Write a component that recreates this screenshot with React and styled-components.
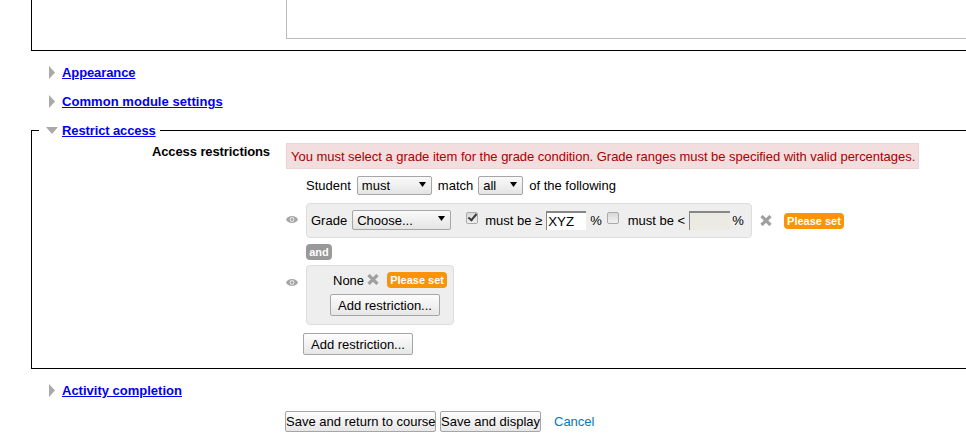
import React from 'react';
import styled, { createGlobalStyle } from 'styled-components';

const GlobalStyle = createGlobalStyle`
  html, body {
    margin: 0;
    padding: 0;
    background: #fff;
  }
  body {
    font-family: "Liberation Sans", Arial, sans-serif;
    font-size: 13px;
    color: #000;
  }
`;

const Page = styled.div`
  width: 966px;
  height: 444px;
  overflow: hidden;
  box-sizing: border-box;
`;

const TopSection = styled.div`
  margin-left: 31px;
  height: 51px;
  box-sizing: border-box;
  border-left: 1px solid #000;
  border-bottom: 1px solid #000;
`;

const TextArea = styled.div`
  margin-left: 254px;
  height: 39px;
  box-sizing: border-box;
  border-left: 1px solid #bbb;
  border-bottom: 1px solid #bbb;
`;

const Collapsed = styled.div`
  display: flex;
  align-items: center;
  height: 16px;
  margin-top: ${p => p.$top}px;
  padding-left: 49px;
`;

const Heading = styled.a`
  font-weight: bold;
  font-size: 13px;
  line-height: 18px;
  height: 16px;
  letter-spacing: ${p => p.$spacing || 0}px;
  color: #0000ee;
  text-decoration: underline;
  cursor: pointer;
`;

const Arrow = styled.svg`
  display: block;
  flex: none;
  fill: #a9a9a9;
`;

const Fieldset = styled.fieldset`
  margin: 13px 0 0 31px;
  padding: 0 0 13px;
  width: 1000px;
  border: 1px solid #000;
  box-sizing: border-box;
`;

const Legend = styled.legend`
  display: flex;
  align-items: center;
  height: 16px;
  margin-left: 7px;
  padding: 0 4px 0 7px;
`;

const FormItem = styled.div`
  display: grid;
  grid-template-columns: 238px 1fr;
  column-gap: 16px;
  margin-top: 5px;
`;

const Label = styled.div`
  font-weight: bold;
  text-align: right;
  line-height: 18px;
  letter-spacing: -0.1px;
`;

const Content = styled.div`
  min-width: 0;
`;

const ErrorBox = styled.div`
  width: 633px;
  height: 26px;
  box-sizing: border-box;
  padding-left: 4px;
  line-height: 25px;
  letter-spacing: -0.03px;
  background: #f2dede;
  border: 1px solid #eed5d5;
  color: #aa0000;
  white-space: nowrap;
`;

const Tree = styled.div`
  margin-left: 20px;
  margin-top: ${p => p.$top || 0}px;
`;

const Line = styled.div`
  display: flex;
  align-items: center;
  height: 20px;
  box-sizing: border-box;
  padding-bottom: ${p => (p.$compact ? 1 : 0)}px;
  white-space: nowrap;
`;

const Text = styled.span`
  margin-left: ${p => p.$left || 0}px;
`;

const SelectWrap = styled.span`
  position: relative;
  display: inline-block;
  flex: none;
  width: ${p => p.$width}px;
  height: ${p => p.$height}px;
  margin-left: ${p => p.$left || 0}px;
`;

const Select = styled.select`
  appearance: none;
  display: block;
  width: 100%;
  height: 100%;
  box-sizing: border-box;
  margin: 0;
  padding: 0 0 0 4px;
  border: 1px solid #a6a6a6;
  border-radius: 2px;
  background: linear-gradient(#fafafa, #e4e4e4);
  font: 13px "Liberation Sans", Arial, sans-serif;
  color: #000;
`;

const SelectArrow = styled.svg`
  position: absolute;
  right: 6px;
  top: 6px;
  fill: #000;
`;

const RowWithEye = styled.div`
  display: flex;
  align-items: center;
  margin-top: ${p => p.$top || 0}px;
  margin-left: -20px;
`;

const Eye = styled.svg`
  flex: none;
  display: block;
  align-self: flex-start;
  width: 12px;
  height: 7px;
  margin-top: ${p => p.$top}px;
  margin-right: 8px;
  fill: #a6a6a6;
`;

const ConditionBox = styled.div`
  box-sizing: border-box;
  width: ${p => p.$width}px;
  height: ${p => p.$height}px;
  background: #eee;
  border: 1px solid #ddd;
  border-radius: 4px;
  padding: ${p => p.$padding};
`;

const Check = styled.input`
  appearance: none;
  position: relative;
  flex: none;
  width: 12px;
  height: 12px;
  margin: -4px 0 0 ${p => p.$left}px;
  box-sizing: border-box;
  border: 1px solid #aaa;
  border-radius: 2px;
  background: linear-gradient(#d8d8d8, #f0f0f0);

  &:checked::after {
    content: '';
    position: absolute;
    left: 3px;
    top: -1px;
    width: 3px;
    height: 7px;
    border: solid #3c3c3c;
    border-width: 0 2px 2px 0;
    transform: rotate(40deg);
  }
`;

const PercentInput = styled.input`
  flex: none;
  box-sizing: border-box;
  width: ${p => p.$width}px;
  height: 19px;
  margin: 0 0 0 ${p => p.$left}px;
  padding: 1px 0 0 1px;
  border: solid #868686;
  border-width: 2px 0 0 1px;
  border-radius: 0;
  background: ${p => (p.disabled ? '#ebebe4' : '#fff')};
  font: 13.33px "Liberation Sans", Arial, sans-serif;
  color: #000;
  outline: none;
`;

const Cross = styled.svg`
  flex: none;
  display: block;
  width: 12px;
  height: 11px;
  margin-top: -1px;
  margin-left: ${p => p.$left}px;
  stroke: #a0a0a0;
  stroke-width: 3.2;
`;

const Badge = styled.span`
  flex: none;
  display: block;
  box-sizing: border-box;
  width: ${p => p.$width}px;
  height: 16px;
  margin-left: ${p => p.$left || 0}px;
  margin-top: ${p => p.$top || 0}px;
  border-radius: 4px;
  background: ${p => p.$color};
  color: #fff;
  font-size: 11px;
  font-weight: bold;
  line-height: 16px;
  text-align: center;
`;

const Button = styled.button`
  display: block;
  box-sizing: border-box;
  width: ${p => p.$width}px;
  height: ${p => p.$height}px;
  margin: ${p => p.$margin || 0};
  padding: 0;
  border: 1px solid #a6a6a6;
  border-radius: 2px;
  background: linear-gradient(#fdfdfd, #e6e6e6);
  font: 13px "Liberation Sans", Arial, sans-serif;
  color: #000;
  white-space: nowrap;
`;

const Actions = styled.div`
  display: flex;
  align-items: center;
  gap: 4px;
  margin: 13px 0 0 285px;
`;

const CancelLink = styled.a`
  margin-left: 9px;
  color: #0077bb;
  cursor: pointer;
`;

const RightArrow = () => (
  <Arrow width="6" height="13" viewBox="0 0 6 13" style={{ marginRight: 7 }}>
    <path d="M0 0 L6 6.5 L0 13 Z" />
  </Arrow>
);

const DownArrow = () => (
  <Arrow width="12" height="7" viewBox="0 0 12 7" style={{ marginRight: 4 }}>
    <path d="M0 0 H12 L6 7 Z" />
  </Arrow>
);

const EyeIcon = ({ top }) => (
  <Eye $top={top} viewBox="0 0 12 7">
    <path fillRule="evenodd" d="M6 0C9 0 11 1.5 12 3.5 11 5.5 9 7 6 7 3 7 1 5.5 0 3.5 1 1.5 3 0 6 0ZM6 1.2A2.3 2.3 0 1 0 6 5.8 2.3 2.3 0 1 0 6 1.2Z" />
    <circle cx="6" cy="3.5" r="1.6" />
  </Eye>
);

const CrossIcon = ({ left }) => (
  <Cross $left={left} viewBox="0 0 12 11">
    <path d="M1.5 1 L10.5 10 M10.5 1 L1.5 10" />
  </Cross>
);

const FakeSelect = ({ width, height = 20, left, value }) => (
  <SelectWrap $width={width} $height={height} $left={left}>
    <Select defaultValue={value}>
      <option>{value}</option>
    </Select>
    <SelectArrow width="7" height="5" viewBox="0 0 7 5">
      <path d="M0 0 H7 L3.5 5 Z" />
    </SelectArrow>
  </SelectWrap>
);

export default function App() {
  return (
    <Page>
      <GlobalStyle />
      <TopSection>
        <TextArea />
      </TopSection>

      <Collapsed $top={13}>
        <RightArrow />
        <Heading $spacing={-0.1}>Appearance</Heading>
      </Collapsed>
      <Collapsed $top={13}>
        <RightArrow />
        <Heading $spacing={0.05}>Common module settings</Heading>
      </Collapsed>

      <Fieldset>
        <Legend>
          <DownArrow />
          <Heading $spacing={-0.12}>Restrict access</Heading>
        </Legend>
        <FormItem>
          <Label>Access restrictions</Label>
          <Content>
            <ErrorBox>You must select a grade item for the grade condition. Grade ranges must be specified with valid percentages.</ErrorBox>
            <Tree $top={7}>
              <Line $compact>
                <span>Student</span>
                <FakeSelect width={75} height={19} left={6} value="must" />
                <Text $left={6}>match</Text>
                <FakeSelect width={45} height={19} left={5} value="all" />
                <Text $left={6}>of the following</Text>
              </Line>

              <RowWithEye $top={7}>
                <EyeIcon top={13} />
                <ConditionBox $width={446} $height={35} $padding="6px 0 0 4px">
                  <Line>
                    <span>Grade</span>
                    <FakeSelect width={99} left={5} value="Choose..." />
                    <Check type="checkbox" defaultChecked $left={15} />
                    <Text $left={7}>must be ≥</Text>
                    <PercentInput defaultValue="XYZ" $width={40} $left={4} />
                    <Text $left={4}>%</Text>
                    <Check type="checkbox" $left={5} />
                    <Text $left={9}>must be &lt;</Text>
                    <PercentInput disabled $width={41} $left={4} />
                    <Text $left={2}>%</Text>
                  </Line>
                </ConditionBox>
                <CrossIcon left={8} />
                <Badge $width={60} $left={12} $color="#f89406">Please set</Badge>
              </RowWithEye>

              <Badge as="div" $width={26} $top={6} $color="#999">and</Badge>

              <RowWithEye $top={5}>
                <EyeIcon top={14} />
                <ConditionBox $width={148} $height={60} $padding="4px 0 0 23px">
                  <Line>
                    <Text $left={3}>None</Text>
                    <CrossIcon left={3} />
                    <Badge $width={60} $left={8} $color="#f89406">Please set</Badge>
                  </Line>
                  <Button $width={110} $height={22} $margin="4px 0 0 0">Add restriction...</Button>
                </ConditionBox>
              </RowWithEye>

              <Button $width={110} $height={22} $margin="8px 0 0 -3px">Add restriction...</Button>
            </Tree>
          </Content>
        </FormItem>
      </Fieldset>

      <Collapsed $top={13}>
        <RightArrow />
        <Heading>Activity completion</Heading>
      </Collapsed>

      <Actions>
        <Button $width={151} $height={21}>Save and return to course</Button>
        <Button $width={101} $height={21}>Save and display</Button>
        <CancelLink>Cancel</CancelLink>
      </Actions>
    </Page>
  );
}
